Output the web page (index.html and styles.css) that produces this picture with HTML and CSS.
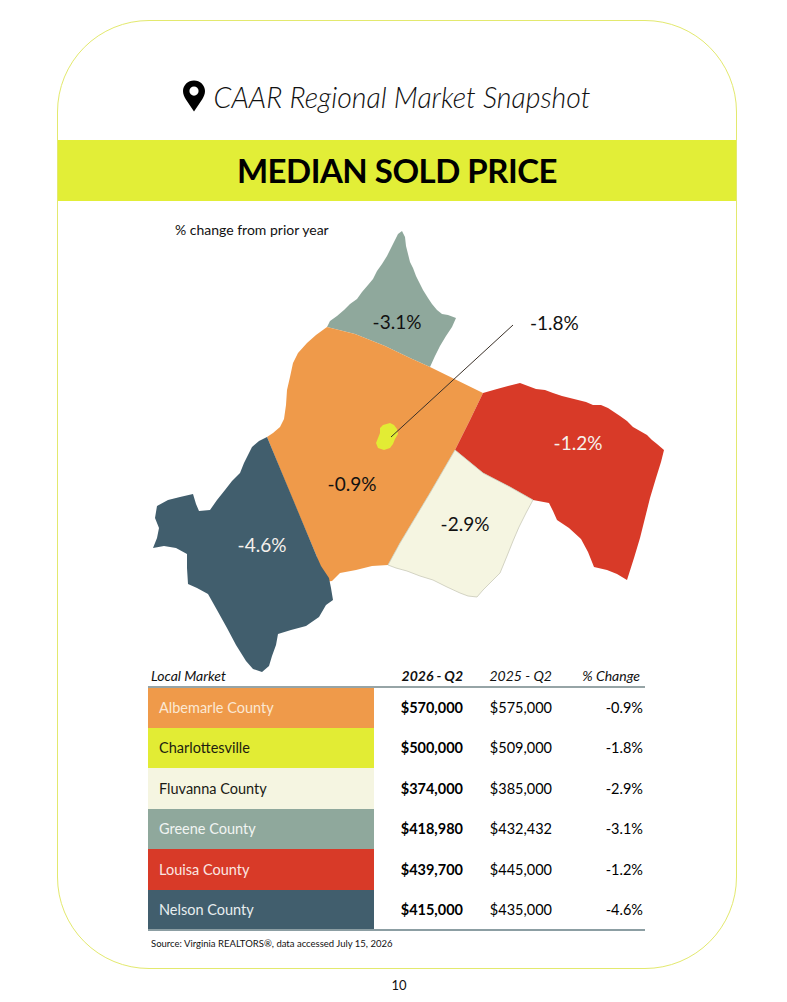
FILE: index.html
```html
<!DOCTYPE html>
<html lang="en">
<head>
<meta charset="utf-8">
<title>CAAR Regional Market Snapshot</title>
<link rel="stylesheet" href="styles.css">
</head>
<body>
<div class="frame">
  <div class="title">
    <svg class="pin" viewBox="0 0 24 34" width="22" height="32" aria-hidden="true">
      <path d="M12 0C5.4 0 0 5.2 0 11.6c0 3.4 1.3 6 3 8.9L12 34l9-13.5c1.7-2.9 3-5.5 3-8.9C24 5.2 18.6 0 12 0zm0 16.6a5 5 0 1 1 0-10 5 5 0 0 1 0 10z" fill="#000"/>
    </svg>
    <span class="title-text">CAAR Regional Market Snapshot</span>
  </div>
  <div class="banner"><h1>MEDIAN SOLD PRICE</h1></div>

  <svg class="map" viewBox="58 201 678 466" width="678" height="466">
    <text class="map-note" x="175" y="235">% change from prior year</text>
    <!-- Greene -->
    <path fill="#8fa89c" d="M402,231 L405,237 L406,246 L408,254 L410,262 L413,268 L416,276 L419,282 L423,290 L428,298 L432,304 L437,310 L442,314 L448,315 L456,318 L452,327 L446,336 L440,346 L435,356 L430,367 L410,358 L385,346 L355,334 L327,327 L330,321 L337,316 L344,310 L350,304 L357,299 L362,292 L368,285 L373,279 L377,271 L382,264 L387,256 L391,248 L395,240 L398,234 Z"/>
    <!-- Albemarle -->
    <path fill="#ef9a4a" d="M327,327 L355,334 L385,346 L410,358 L430,367 L483,393 L470,420 L455,450 L430,493 L400,543 L388,565 L372,566 L356,570 L340,573 L332,581 L323,582 L319,572 L317,557 L292,498 L267,437 L273,433 L280,427 L284,419 L286,405 L287,390 L290,377 L293,363 L298,353 L307,343 L316,335 Z"/>
    <!-- Nelson -->
    <path fill="#415e6d" d="M267,437 L317,557 L321,566 L329,578 L331,588 L333,600 L326,605 L319,617 L306,626 L291,630 L278,634 L276,645 L272,656 L269,666 L262,672 L253,669 L246,661 L236,645 L227,628 L217,610 L208,594 L197,588 L188,584 L187,568 L187,554 L176,548 L164,546 L153,548 L157,538 L159,528 L155,518 L157,506 L168,500 L180,497 L193,494 L196,504 L199,511 L210,510 L217,500 L225,490 L232,481 L240,473 L244,463 L248,455 L252,447 L259,441 Z"/>
    <!-- Louisa -->
    <path fill="#d83a28" d="M483,393 L497,389 L508,386 L520,383 L528,386 L536,389 L545,390 L553,393 L562,396 L570,398 L578,400 L586,402 L593,405 L601,405 L608,408 L614,412 L620,416 L627,421 L633,427 L640,431 L647,435 L652,440 L657,444 L664,450 L661,462 L656,478 L650,498 L645,518 L640,538 L634,558 L627,580 L617,574 L607,570 L594,567 L588,552 L581,539 L569,528 L557,520 L553,511 L549,503 L533,500 L510,487 L483,473 L455,450 L470,420 Z"/>
    <!-- Fluvanna -->
    <path fill="#f5f5e1" stroke="#c9c9b8" stroke-width="0.8" d="M455,450 L483,473 L510,487 L533,500 L526,513 L519,527 L513,541 L507,556 L500,573 L491,582 L483,590 L477,597 L468,596 L460,593 L447,587 L433,580 L420,576 L407,571 L396,568 L388,565 L400,543 L430,493 Z"/>
    <!-- Charlottesville -->
    <path fill="#e2ec34" d="M383,425 L390,423 L394,425 L397,429 L398,434 L395,439 L393,444 L390,448 L384,450 L378,448 L376,443 L378,438 L380,433 L380,428 Z"/>
    <line x1="391" y1="437" x2="513" y2="325" stroke="#3a3028" stroke-width="1"/>
    <text class="lbl" x="397" y="329">-3.1%</text>
    <text class="lbl lbl-start" x="530" y="330">-1.8%</text>
    <text class="lbl lbl-light" x="578" y="450">-1.2%</text>
    <text class="lbl" x="352" y="491">-0.9%</text>
    <text class="lbl" x="465" y="531">-2.9%</text>
    <text class="lbl lbl-light" x="262" y="552">-4.6%</text>
  </svg>

  <table class="market">
    <thead>
      <tr>
        <th class="c-name">Local Market</th>
        <th class="c-cur">2026 - Q2</th>
        <th class="c-prev">2025 - Q2</th>
        <th class="c-chg">% Change</th>
      </tr>
    </thead>
    <tbody>
      <tr>
        <td class="c-name r-alb">Albemarle County</td>
        <td class="c-cur">$570,000</td>
        <td class="c-prev">$575,000</td>
        <td class="c-chg">-0.9%</td>
      </tr>
      <tr>
        <td class="c-name r-cvl">Charlottesville</td>
        <td class="c-cur">$500,000</td>
        <td class="c-prev">$509,000</td>
        <td class="c-chg">-1.8%</td>
      </tr>
      <tr>
        <td class="c-name r-flu">Fluvanna County</td>
        <td class="c-cur">$374,000</td>
        <td class="c-prev">$385,000</td>
        <td class="c-chg">-2.9%</td>
      </tr>
      <tr>
        <td class="c-name r-gre">Greene County</td>
        <td class="c-cur">$418,980</td>
        <td class="c-prev">$432,432</td>
        <td class="c-chg">-3.1%</td>
      </tr>
      <tr>
        <td class="c-name r-lou">Louisa County</td>
        <td class="c-cur">$439,700</td>
        <td class="c-prev">$445,000</td>
        <td class="c-chg">-1.2%</td>
      </tr>
      <tr>
        <td class="c-name r-nel">Nelson County</td>
        <td class="c-cur">$415,000</td>
        <td class="c-prev">$435,000</td>
        <td class="c-chg">-4.6%</td>
      </tr>
    </tbody>
  </table>
  <p class="source">Source: Virginia REALTORS®, data accessed July 15, 2026</p>
</div>
<div class="pagenum">10</div>
</body>
</html>
```

FILE: styles.css
```css
html, body {
  margin: 0;
  padding: 0;
  background: #ffffff;
}
body {
  width: 787px;
  font-family: Lato, "Open Sans", "Liberation Sans", sans-serif;
  color: #000;
}
.frame {
  box-sizing: border-box;
  margin: 20px 0 0 57px;
  width: 680px;
  height: 949px;
  border: 1.5px solid #e3e96e;
  border-radius: 92px;
}
.title {
  box-sizing: border-box;
  height: 118.5px;
  display: flex;
  align-items: flex-end;
  justify-content: center;
  gap: 9px;
  padding: 0 21px 25px 0;
}
.pin {
  display: block;
  margin-bottom: 3px;
}
.title-text {
  font-style: italic;
  font-weight: 300;
  font-size: 28.5px;
  line-height: 36px;
  color: #111;
}
.banner {
  height: 61px;
  background: #e2ee37;
  display: flex;
  align-items: center;
  justify-content: center;
}
.banner h1 {
  margin: 0;
  font-size: 33px;
  font-weight: 700;
  color: #000;
  letter-spacing: -0.5px;
}
.map {
  display: block;
  overflow: visible;
  position: relative;
  z-index: 1;
}
.map-note {
  font-size: 14px;
  fill: #111;
}
.lbl {
  font-size: 19px;
  fill: #111;
  text-anchor: middle;
}
.lbl-start {
  text-anchor: start;
}
.lbl-light {
  fill: #f6f1ec;
}
.market {
  margin-left: 90px;
  width: 497px;
  border-collapse: collapse;
  table-layout: fixed;
  font-size: 14.5px;
}
.market th,
.market td {
  box-sizing: border-box;
}
.market th {
  font-style: italic;
  font-weight: 400;
  font-size: 14px;
  height: 20px;
  padding: 0 2px 2px;
  vertical-align: bottom;
  border-bottom: 2px solid #96a4a6;
  color: #111;
}
.market th.c-cur {
  font-weight: 700;
}
.market td {
  height: 40px;
  padding: 0 2px;
}
.market tbody tr:nth-child(odd) td {
  height: 41px;
}
.market tbody tr:last-child td {
  border-bottom: 2px solid #8c9ea3;
}
.c-name {
  width: 226px;
  text-align: left;
}
.market td.c-name {
  padding-left: 11px;
}
.market th.c-name {
  padding-left: 3px;
}
.c-cur {
  width: 91px;
  text-align: right;
}
.market td.c-cur {
  font-weight: 700;
}
.c-prev {
  width: 89px;
  text-align: right;
}
.c-chg {
  text-align: right;
}
.market th.c-chg {
  padding-right: 5px;
}
.r-alb { background: #ef9a4a; color: #fbe8d3; }
.r-cvl { background: #e2ec34; color: #1d1d10; }
.r-flu { background: #f5f5e1; color: #1a1a14; }
.r-gre { background: #8fa89c; color: #f1f4f2; }
.r-lou { background: #d83a28; color: #fbe6e2; }
.r-nel { background: #415e6d; color: #e8eef0; }
.source {
  margin: 7px 0 0 93px;
  font-size: 9.5px;
  color: #111;
}
.pagenum {
  margin-top: 8px;
  padding-left: 11px;
  text-align: center;
  font-size: 13px;
  color: #111;
}
```
